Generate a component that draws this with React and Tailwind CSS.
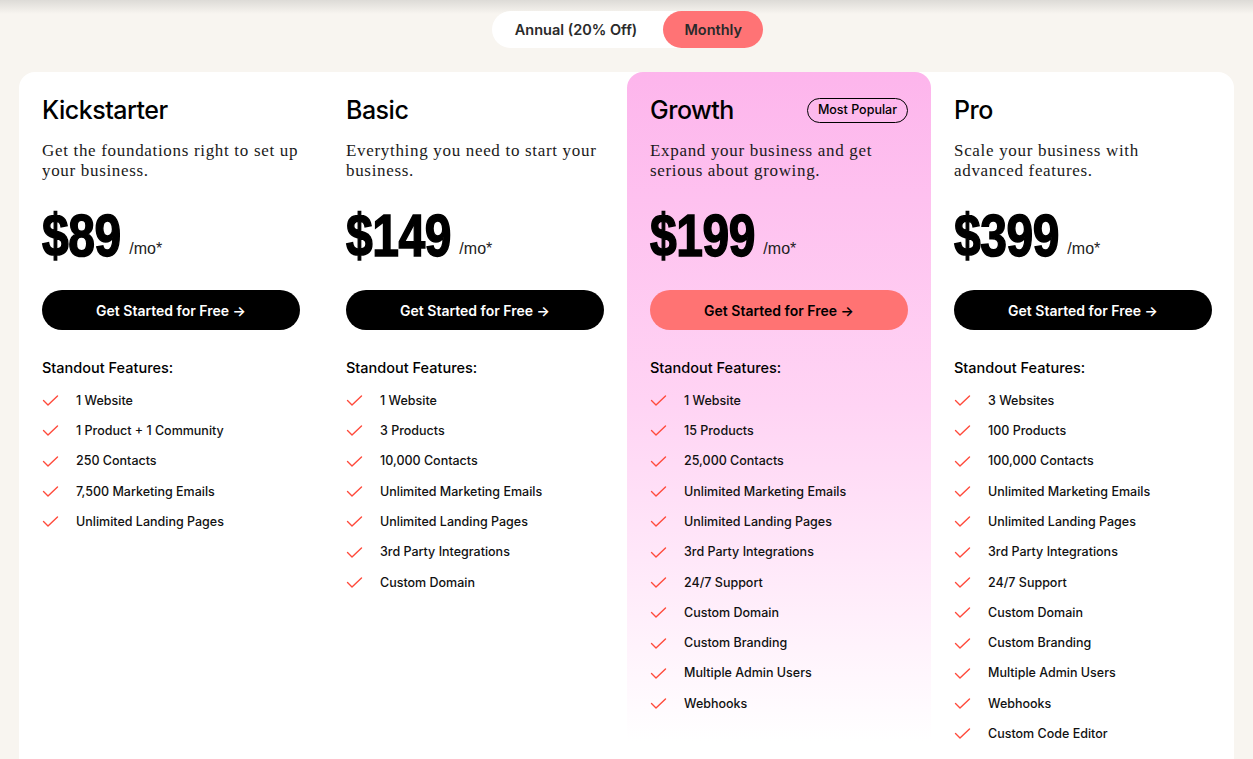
import React from 'react';

const plans = [
  {
    name: 'Kickstarter',
    desc: ['Get the foundations right to set up', 'your business.'],
    price: '$89',
    features: ['1 Website', '1 Product + 1 Community', '250 Contacts', '7,500 Marketing Emails', 'Unlimited Landing Pages'],
  },
  {
    name: 'Basic',
    desc: ['Everything you need to start your', 'business.'],
    price: '$149',
    features: ['1 Website', '3 Products', '10,000 Contacts', 'Unlimited Marketing Emails', 'Unlimited Landing Pages', '3rd Party Integrations', 'Custom Domain'],
  },
  {
    name: 'Growth',
    desc: ['Expand your business and get', 'serious about growing.'],
    price: '$199',
    popular: true,
    features: ['1 Website', '15 Products', '25,000 Contacts', 'Unlimited Marketing Emails', 'Unlimited Landing Pages', '3rd Party Integrations', '24/7 Support', 'Custom Domain', 'Custom Branding', 'Multiple Admin Users', 'Webhooks'],
  },
  {
    name: 'Pro',
    desc: ['Scale your business with', 'advanced features.'],
    price: '$399',
    features: ['3 Websites', '100 Products', '100,000 Contacts', 'Unlimited Marketing Emails', 'Unlimited Landing Pages', '3rd Party Integrations', '24/7 Support', 'Custom Domain', 'Custom Branding', 'Multiple Admin Users', 'Webhooks', 'Custom Code Editor'],
  },
];

const sans = "font-['Inter','Liberation_Sans',sans-serif]";

// price glyphs are squeezed horizontally to mimic a condensed display face
const GLYPH_W = 33.4;
const SQUEEZE = 0.8;

const Check = () => (
  <svg width="18" height="12" viewBox="0 0 18 12" fill="none" className="shrink-0">
    <path d="M1.5 5.5 L6 10 L15.5 1" stroke="#ff4a3b" strokeWidth="1.4" strokeLinecap="round" strokeLinejoin="round" />
  </svg>
);

const PlanColumn = ({ plan }) => (
  <div
    className={`w-[304px] shrink-0 px-[23px] pt-[23px] pb-[22px] self-start ${
      plan.popular ? 'bg-linear-to-b from-[#fdb5ec] via-[#ffd4f4] via-50% to-white rounded-t-2xl' : ''
    }`}
  >
    <div className="flex items-center justify-between h-[30px]">
      <h2 className={`${sans} text-[25px] font-medium tracking-[-0.02em] text-black leading-[30px]`}>{plan.name}</h2>
      {plan.popular && (
        <span className={`${sans} border border-black rounded-full px-[10px] h-[25px] flex items-center text-[12.5px] font-medium text-black`}>
          Most Popular
        </span>
      )}
    </div>

    <p className="mt-4 whitespace-nowrap font-['Liberation_Serif',serif] text-[17px] leading-[20px] text-[#1a1a1a] tracking-[0.04em]">
      {plan.desc[0]}
      <br />
      {plan.desc[1]}
    </p>

    <div className="mt-[27px] flex items-end gap-[9px] h-[56px]">
      <span
        className="inline-block origin-left scale-x-[0.8] font-['Liberation_Sans',sans-serif] font-bold text-[60px] leading-[56px] tracking-[-0.01em] text-black [-webkit-text-stroke:1.6px_black]"
        style={{ marginRight: -plan.price.length * GLYPH_W * (1 - SQUEEZE) }}
      >
        {plan.price}
      </span>
      <span className="font-['Liberation_Sans',sans-serif] text-[16px] text-[#222] mb-[3px]">/mo*</span>
    </div>

    <button
      className={`${sans} mt-[26px] w-[258px] h-10 rounded-full text-[14px] font-semibold ${
        plan.popular ? 'bg-[#ff7373] text-black' : 'bg-black text-white'
      }`}
    >
      Get Started for Free →
    </button>

    <h3 className={`${sans} mt-7 text-[14.5px] font-medium text-black leading-[20px]`}>Standout Features:</h3>

    <ul className="mt-[8px]">
      {plan.features.map((f) => (
        <li key={f} className="flex items-center gap-4 h-[30.3px]">
          <Check />
          <span className={`${sans} text-[12.5px] font-medium text-[#111]`}>{f}</span>
        </li>
      ))}
    </ul>
  </div>
);

export default function App() {
  return (
    <div className="h-[759px] overflow-hidden bg-[#f8f5f0] bg-[linear-gradient(to_bottom,#dddbd7_0px,#f8f5f0_14px)]">
      <div className="flex justify-center pt-[11px]">
        <div className={`${sans} flex items-center bg-white rounded-full h-[37px] text-[14.5px] font-semibold text-[#2a2a2a] ml-[2px]`}>
          <span className="pl-[23px] pr-[26px]">Annual (20% Off)</span>
          <span className="bg-[#ff7375] rounded-full h-[37px] w-[100px] flex items-center justify-center">Monthly</span>
        </div>
      </div>

      <div className="px-[19px] mt-[24px]">
        <div className="bg-white rounded-2xl flex min-h-[720px]">
          {plans.map((p) => (
            <PlanColumn key={p.name} plan={p} />
          ))}
        </div>
      </div>
    </div>
  );
}
